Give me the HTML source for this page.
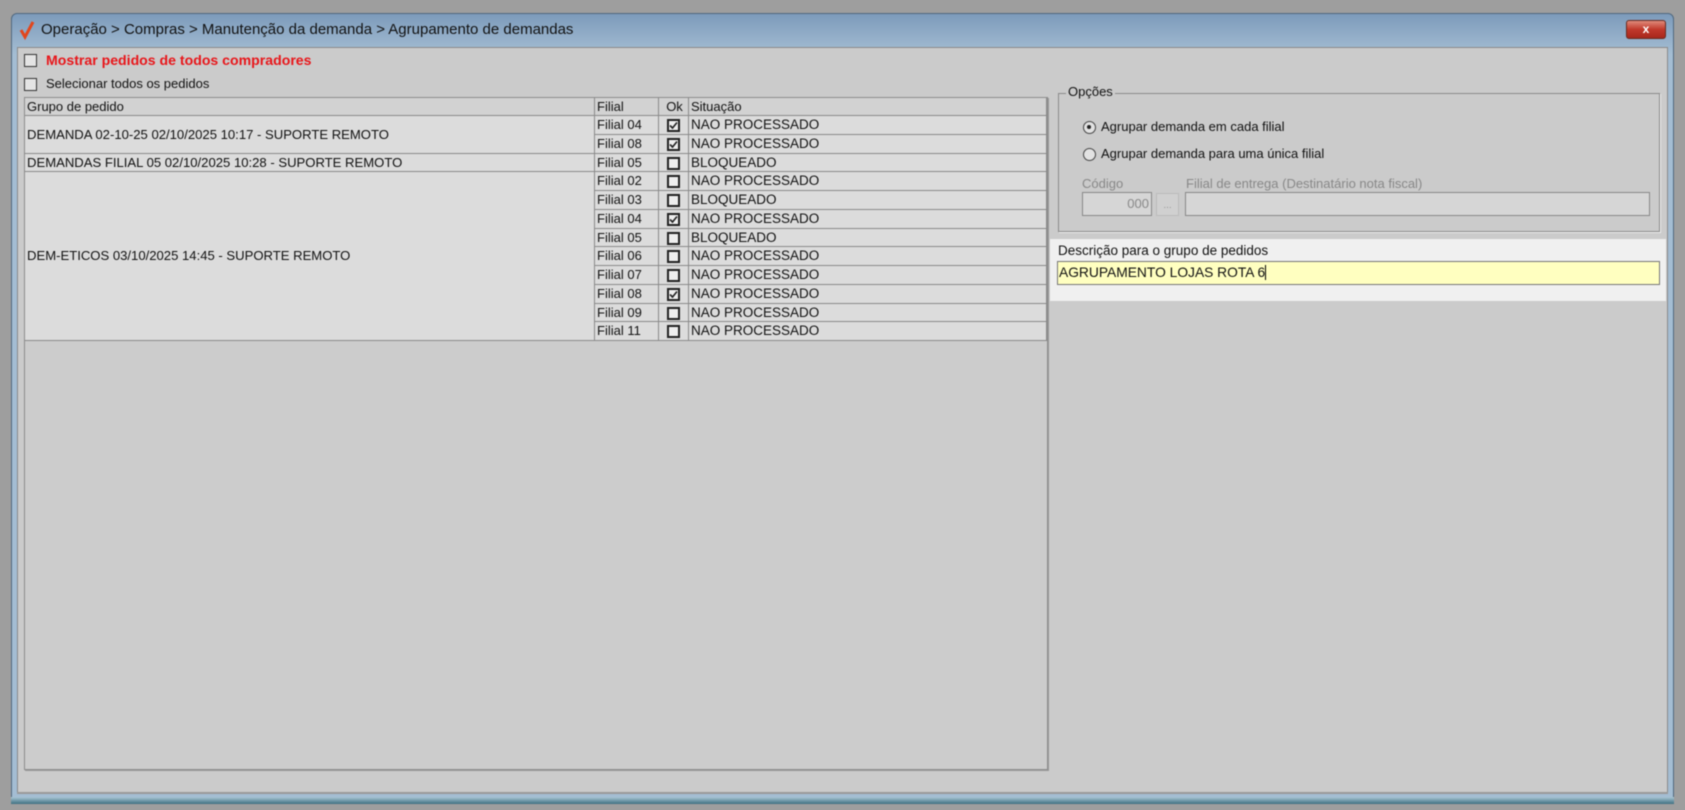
<!DOCTYPE html>
<html><head><meta charset="utf-8"><style>
*{margin:0;padding:0;box-sizing:border-box}
body{width:1685px;height:810px;background:#9e9e9e;font-family:"Liberation Sans",sans-serif;font-size:13px;color:#111;overflow:hidden;position:relative}
#w{position:absolute;left:0;top:0;width:1685px;height:810px;filter:blur(0.6px)}
.a{position:absolute}
.t{white-space:nowrap}
.win{left:11px;top:13px;width:1663px;height:791px;background:linear-gradient(#7d9bbb,#a4bdd3 40px,#a4bdd3);border:1px solid #50687f;border-radius:6px 6px 0 0}
.client{left:17px;top:47px;width:1651px;height:746px;background:#cbcbcb;border:1px solid #8a8a8a}
.cb{width:13px;height:13px;border:1.5px solid #333;background:#e4e4e4}
.grid{left:24px;top:97px;width:1024px;height:673px;background:#cccccc;border:1px solid #8c8c8c;box-shadow:1px 1px 0 #999}
.cell{position:absolute;background:#dcdcdc;border-right:1px solid #8a8a8a;border-bottom:1px solid #8a8a8a;padding-left:2px;white-space:nowrap;overflow:hidden}
.chk{position:absolute;width:13px;height:13px;border:2px solid #222;background:#eee}
.chk svg{position:absolute;left:0;top:0}
</style></head><body><div id="w">
<div class="a win"></div>
<svg class="a" style="left:19px;top:20px" width="16" height="20" viewBox="0 0 16 20"><path d="M2 10 L6 17 L14 2" stroke="#e2461c" stroke-width="3" fill="none"/></svg>
<div class="a t" style="left:41px;top:21px;font-size:15px;color:#111">Operação &gt; Compras &gt; Manutenção da demanda &gt; Agrupamento de demandas</div>
<div class="a" style="left:1626px;top:20px;width:40px;height:19px;border-radius:3px;background:linear-gradient(#e08a7a,#c0392b 50%,#a8281c);border:1px solid #6a2a20;color:#fff;font-weight:bold;font-size:12px;text-align:center;line-height:17px">x</div>
<div class="a client"></div>
<div class="a cb" style="left:24px;top:54px"></div>
<div class="a t" style="left:46px;top:52px;color:#e8161a;font-weight:bold;font-size:14.1px">Mostrar pedidos de todos compradores</div>
<div class="a cb" style="left:24px;top:78px"></div>
<div class="a t" style="left:46px;top:76px;font-size:13px">Selecionar todos os pedidos</div>
<div class="a grid"></div>
<div class="cell" style="left:25px;top:98px;width:570px;height:18px;background:#d2d2d2;line-height:17px">Grupo de pedido</div>
<div class="cell" style="left:595px;top:98px;width:64px;height:18px;background:#d2d2d2;line-height:17px">Filial</div>
<div class="cell" style="left:659px;top:98px;width:30px;height:18px;background:#d2d2d2;line-height:17px;text-align:center">Ok</div>
<div class="cell" style="left:689px;top:98px;width:358px;height:18px;background:#d2d2d2;line-height:17px">Situação</div>
<div class="cell" style="left:25px;top:116px;width:570px;height:37.5px;line-height:37px;font-size:13.1px">DEMANDA 02-10-25 02/10/2025 10:17 - SUPORTE REMOTO</div>
<div class="cell" style="left:25px;top:153.5px;width:570px;height:18.75px;line-height:18px;font-size:13.1px">DEMANDAS FILIAL 05 02/10/2025 10:28 - SUPORTE REMOTO</div>
<div class="cell" style="left:25px;top:172.25px;width:570px;height:168.75px;line-height:168px;font-size:13.1px">DEM-ETICOS 03/10/2025 14:45 - SUPORTE REMOTO</div>
<div id="rows"></div>
<div class="a" style="left:1058px;top:93px;width:602px;height:139px;border:1px solid #8a8a8a;box-shadow:1px 1px 0 #eee"></div>
<div class="a t" style="left:1066px;top:84px;background:#cbcbcb;padding:0 2px">Opções</div>
<div class="a" style="left:1083px;top:121px;width:13px;height:13px;border:1.5px solid #444;border-radius:50%;background:#e2e2e2"><div style="position:absolute;left:3px;top:3px;width:4px;height:4px;border-radius:50%;background:#222"></div></div>
<div class="a t" style="left:1101px;top:119px">Agrupar demanda em cada filial</div>
<div class="a" style="left:1083px;top:148px;width:13px;height:13px;border:1.5px solid #444;border-radius:50%;background:#e2e2e2"></div>
<div class="a t" style="left:1101px;top:146px">Agrupar demanda para uma única filial</div>
<div class="a t" style="left:1082px;top:176px;color:#888">Código</div>
<div class="a t" style="left:1186px;top:176px;color:#888">Filial de entrega (Destinatário nota fiscal)</div>
<div class="a" style="left:1082px;top:192px;width:70px;height:24px;border:1px solid #888;background:#d6d6d6;color:#888;text-align:right;line-height:22px;padding-right:2px">000</div>
<div class="a" style="left:1156px;top:193px;width:23px;height:23px;border:1px solid #bbb;background:#d0d0d0;color:#999;text-align:center;line-height:24px;font-size:10px">...</div>
<div class="a" style="left:1185px;top:192px;width:465px;height:24px;border:1px solid #888;background:#d6d6d6"></div>
<div class="a" style="left:1050px;top:239px;width:616px;height:62px;background:#f0f0f0"></div>
<div class="a t" style="left:1058px;top:243px;font-size:13.5px">Descrição para o grupo de pedidos</div>
<div class="a t" style="left:1057px;top:261px;width:603px;height:24px;border:1px solid #777;background:#ffffc0;line-height:22px;padding-left:1px;font-size:13.8px">AGRUPAMENTO LOJAS ROTA 6<span style="display:inline-block;width:1px;height:15px;background:#000;vertical-align:-3px"></span></div>
<div class="a" style="left:17px;top:792px;width:1651px;height:2px;background:#999"></div>
<div class="a" style="left:11px;top:797px;width:1663px;height:7px;background:linear-gradient(#a9c6d4,#3e6f80)"></div>
</div>
<script>
var d=[["04",1,"NAO PROCESSADO"],["08",1,"NAO PROCESSADO"],["05",0,"BLOQUEADO"],["02",0,"NAO PROCESSADO"],["03",0,"BLOQUEADO"],["04",1,"NAO PROCESSADO"],["05",0,"BLOQUEADO"],["06",0,"NAO PROCESSADO"],["07",0,"NAO PROCESSADO"],["08",1,"NAO PROCESSADO"],["09",0,"NAO PROCESSADO"],["11",0,"NAO PROCESSADO"]];
var h="";
d.forEach(function(r,i){var y=116+i*18.75;
h+='<div class="cell" style="left:595px;top:'+y+'px;width:64px;height:18.75px;line-height:18px">Filial '+r[0]+'</div>';
h+='<div class="cell" style="left:659px;top:'+y+'px;width:30px;height:18.75px"></div>';
h+='<div class="chk" style="left:667px;top:'+(y+3)+'px">'+(r[1]?'<svg width="9" height="9" viewBox="0 0 9 9"><path d="M1 4.5 L3.5 7 L8 1.5" stroke="#222" stroke-width="1.6" fill="none"/></svg>':'')+'</div>';
h+='<div class="cell" style="left:689px;top:'+y+'px;width:358px;height:18.75px;line-height:18px;font-size:13.5px">'+r[2]+'</div>';});
document.getElementById("rows").innerHTML=h;
</script>
</body></html>
